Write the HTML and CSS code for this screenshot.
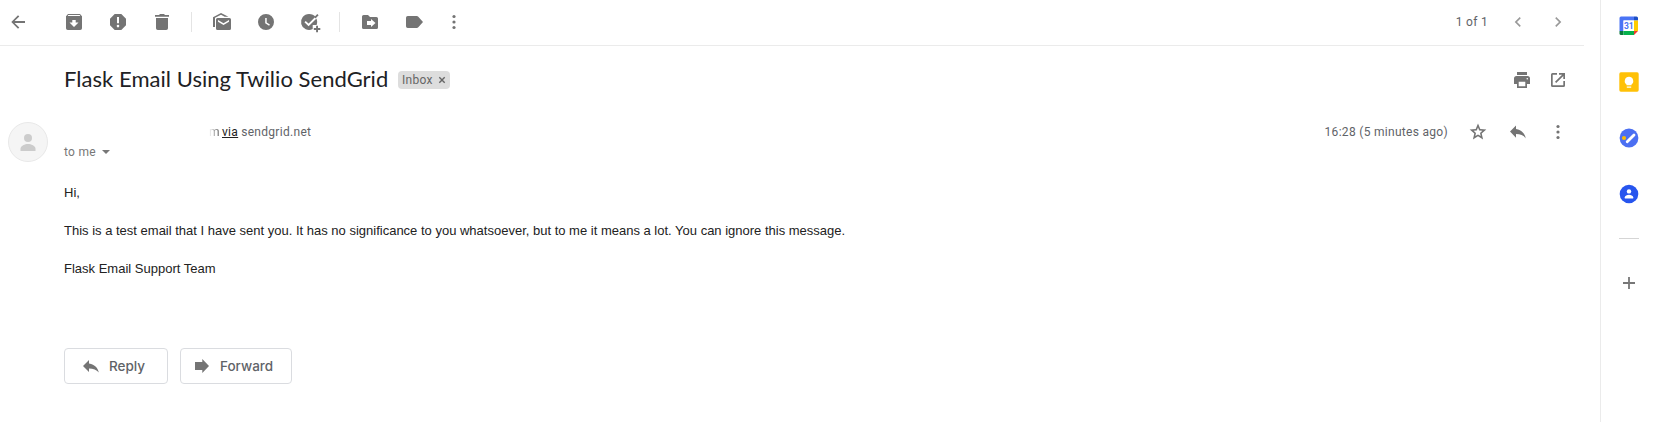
FILE: index.html
```html
<!DOCTYPE html>
<html lang="en">
<head>
<meta charset="utf-8">
<title>Flask Email Using Twilio SendGrid</title>
<link rel="stylesheet" href="styles.css">
</head>
<body>
<div class="app">
  <main class="mail">
    <header class="toolbar">
      <svg class="icon back" viewBox="0 0 20 20"><path d="M17 9.1H6.600l4.700-4.500L10 3.300 3.300 10l6.700 6.700 1.300-1.300-4.700-4.500H17z"/></svg>
      <svg class="icon" viewBox="0 0 20 20"><path fill-rule="evenodd" d="M4 2h12l2 2.300V16.200a1.800 1.800 0 0 1-1.800 1.800H3.800A1.800 1.800 0 0 1 2 16.200V4.300zM4.300 3L3.700 4h12.600l-.600-1zM8.300 8v2.500H5.500L10 15l4.500-4.500h-2.800V8z"/></svg>
      <svg class="icon" viewBox="0 0 20 20"><path fill-rule="evenodd" d="M6.700 2h6.600L18 6.700v6.600L13.300 18H6.700L2 13.300V6.700zM9 5v6.300h2V5zM10 12.800a1.300 1.300 0 1 0 0 2.600 1.300 1.300 0 0 0 0-2.600z"/></svg>
      <svg class="icon" viewBox="0 0 20 20"><path d="M3 3h4l1-1h4l1 1h4v1.800H3zM4 6h12v10.200a1.800 1.800 0 0 1-1.800 1.800H5.800A1.800 1.800 0 0 1 4 16.200z"/></svg>
      <span class="divider"></span>
      <svg class="icon" viewBox="0 0 20 20"><path d="M1 15V5.200L9 1l7.500 3.700h-3.800L9 2.800 3 5.700V15z"/><path fill-rule="evenodd" d="M5.500 6h12A1.500 1.500 0 0 1 19 7.500v9a1.500 1.500 0 0 1-1.500 1.500h-12A1.500 1.500 0 0 1 4 16.500v-9A1.500 1.500 0 0 1 5.500 6zM6 8v1.700l5.500 3.300L17 9.700V8l-5.500 3.300z"/></svg>
      <svg class="icon" viewBox="0 0 20 20"><path fill-rule="evenodd" d="M10 2a8 8 0 1 0 0 16 8 8 0 0 0 0-16zM9.200 6h1.500v4.500l3.200 2-.8 1.300-3.900-2.500z"/></svg>
      <svg class="icon wide" viewBox="0 0 20 20"><path d="M9 2a8 8 0 1 0 3.700 15.100V13h3.900A8 8 0 0 0 9 2z"/><path class="knock" d="M5.100 9.600L8.600 13l9-9"/><path d="M17.300 2l1.300 1.300-3.100 3.200-1.100-1.500z"/><path d="M16.100 13.800H18v2.300h2.300V18H18v2.300h-1.900V18h-2.300v-1.900h2.300z"/></svg>
      <span class="divider"></span>
      <svg class="icon" viewBox="0 0 20 20"><path fill-rule="evenodd" d="M3.600 3H8l2 2h6.400A1.600 1.600 0 0 1 18 6.600v8.800a1.600 1.600 0 0 1-1.600 1.600H3.600A1.600 1.600 0 0 1 2 15.400V4.600A1.600 1.600 0 0 1 3.600 3zM11 7v2H7v4h4v2l4.500-4z"/></svg>
      <svg class="icon" viewBox="0 0 20 20"><path d="M3.700 4h9.100c.6 0 1.100.3 1.500.7L19 10l-4.700 5.300c-.4.400-.9.700-1.500.7H3.700A1.700 1.700 0 0 1 2 14.300V5.700A1.700 1.700 0 0 1 3.700 4z"/></svg>
      <svg class="icon more" viewBox="0 0 20 20"><circle cx="10" cy="4.500" r="1.600"/><circle cx="10" cy="10" r="1.600"/><circle cx="10" cy="15.500" r="1.600"/></svg>
      <span class="count">1 of 1</span>
      <svg class="icon pale" viewBox="0 0 20 20"><path d="M12.800 6.200L9 10l3.800 3.800-1.100 1.200-5-5 5-5z"/></svg>
      <svg class="icon pale" viewBox="0 0 20 20"><path d="M7.200 6.200L11 10l-3.800 3.800L8.300 15l5-5-5-5z"/></svg>
    </header>

    <section class="subject">
      <h1>Flask Email Using Twilio SendGrid</h1>
      <span class="chip">Inbox<svg class="chip-x" viewBox="0 0 8 8"><path d="M1.300 1.300l5.400 5.400M6.700 1.300L1.300 6.700"/></svg></span>
      <div class="actions">
        <svg class="icon" viewBox="0 0 20 20"><path d="M5 2h10v3H5z"/><path fill-rule="evenodd" d="M4.500 6h11A2.500 2.500 0 0 1 18 8.500V14h-3v4H5v-4H2V8.500A2.500 2.500 0 0 1 4.500 6zM6.700 11.700v4.600h6.600v-4.600zM15.300 8a.8.8 0 1 0 0 1.600.8.8 0 0 0 0-1.600z"/></svg>
        <svg class="icon" viewBox="0 0 20 20"><path d="M9 3v1.700H4.700v10.600h10.600V11H17v4.500a1.500 1.500 0 0 1-1.500 1.500h-11A1.500 1.500 0 0 1 3 15.500v-11A1.500 1.500 0 0 1 4.500 3zM11 3h6v6h-1.700V5.900l-7.100 7.100L7 11.800l7.100-7.100H11z"/></svg>
      </div>
    </section>

    <section class="sender">
      <svg class="avatar" viewBox="0 0 40 40"><circle class="disc" cx="20" cy="20" r="19.500"/><circle class="figure" cx="20" cy="16" r="4"/><path class="figure" d="M12.500 29v-2.300c0-3 4.500-4.700 7.500-4.700s7.500 1.700 7.500 4.700V29z"/></svg>
      <div class="who">
        <div class="from"><span class="faded">m</span><a class="via">via</a><span>sendgrid.net</span></div>
        <div class="to">to me<span class="caret"></span></div>
      </div>
      <div class="meta">
        <span class="time">16:28 (5 minutes ago)</span>
        <svg class="icon" viewBox="0 0 20 20"><path fill-rule="evenodd" d="M10 1.500l2.300 5.500 6 .5-4.600 4 1.400 5.900-5.100-3.200-5.100 3.200 1.400-5.900-4.600-4 6-.5zM10 5.500L8.800 8.500l-3.200.3L8 11l-.7 3.100L10 12.500l2.700 1.600-.7-3.100 2.400-2.200-3.200-.3z"/></svg>
        <svg class="icon" viewBox="0 0 20 20"><path d="M8 7V3.500L2 9.600l6 6.100v-3.600c4.300 0 7.500 1.200 9.800 4.300C17 12 14 8 8 7z"/></svg>
        <svg class="icon" viewBox="0 0 20 20"><circle cx="10" cy="4.500" r="1.600"/><circle cx="10" cy="10" r="1.600"/><circle cx="10" cy="15.500" r="1.600"/></svg>
      </div>
    </section>

    <article class="body">
      <p>Hi,</p>
      <p>This is a test email that I have sent you. It has no significance to you whatsoever, but to me it means a lot. You can ignore this message.</p>
      <p>Flask Email Support Team</p>
    </article>

    <footer class="buttons">
      <button class="btn reply"><svg class="icon" viewBox="0 0 20 20"><path d="M8 7.400V4L2 10l6 6v-3.500c4.300 0 7.500 1.200 9.800 4.100C17 12.200 14 8.300 8 7.400z"/></svg><span>Reply</span></button>
      <button class="btn forward"><svg class="icon" viewBox="0 0 20 20"><path d="M3 6h7.300V3L17 10l-6.700 7v-3H3z"/></svg><span>Forward</span></button>
    </footer>
  </main>

  <aside class="side">
    <svg class="app-icon" viewBox="0 0 20 20"><path fill="#4a74f5" d="M2 .5h13v4H4.500V15H.5V2A1.500 1.500 0 0 1 2 .5z"/><path fill="#1d4fc4" d="M15 .5h2.500A1.500 1.500 0 0 1 19 2v2.500h-4z"/><path fill="#fc0" d="M15 4.500h4V15h-4z"/><path fill="#08793a" d="M.5 15h4v4H2a1.500 1.500 0 0 1-1.500-1.500z"/><path fill="#05b14c" d="M4.500 15H15v4H4.500z"/><path fill="#ee3a30" d="M15 15h4l-4 4z"/><path fill="#fff" d="M4.500 4.500H15V15H4.500z"/><text class="date" x="9.800" y="13" text-anchor="middle">31</text></svg>
    <svg class="app-icon" viewBox="0 0 20 20"><rect x=".3" y=".3" width="19.400" height="19.400" rx="1.600" fill="#ffc107"/><path fill="#fff" d="M10 4.800a4.200 4.200 0 0 0-2.500 7.600v.9h5v-.9A4.200 4.200 0 0 0 10 4.800zM7.800 14.400h4.400v1.300H7.800z"/></svg>
    <svg class="app-icon" viewBox="0 0 20 20"><circle cx="10" cy="10" r="9.400" fill="#4b6ff2"/><circle cx="5" cy="10" r="2.100" fill="#fbbc04"/><path class="stroke-white" d="M8.200 13.800l6.800-6.900"/></svg>
    <svg class="app-icon" viewBox="0 0 20 20"><circle cx="10" cy="10" r="9.300" fill="#2755ee"/><circle cx="10" cy="7.400" r="2.200" fill="#fff"/><path fill="#fff" d="M5.800 14.500v-1.200c0-1.600 2.400-2.500 4.200-2.500s4.200.9 4.200 2.500v1.200z"/></svg>
    <span class="rule"></span>
    <svg class="app-icon plus" viewBox="0 0 20 20"><path d="M9.100 4h1.800v5.100H16v1.800h-5.100V16H9.100v-5.100H4V9.100h5.100z"/></svg>
  </aside>
</div>
</body>
</html>
```
FILE: styles.css
```css
* { box-sizing: border-box; }
body { margin: 0; background: #fff; color: #222; font-family: Roboto, sans-serif; overflow: hidden; }
svg { display: block; flex: none; }
.app { display: flex; width: 1656px; height: 422px; }
.mail { width: 1600px; padding-right: 16px; }
.icon { width: 20px; height: 20px; fill: #747474; }
.pale { fill: #999; }

.toolbar { display: flex; align-items: center; height: 46px; padding: 0 16px 2px 8px; border-bottom: 1px solid #ebebeb; }
.toolbar .icon { margin-right: 24px; }
.toolbar .back { margin-right: 36px; }
.toolbar .wide { overflow: visible; }
.toolbar .more { margin-right: 0; margin-left: -4px; }
.toolbar .pale { margin-right: 20px; }
.toolbar .pale:last-child { margin-right: 0; }
.divider { width: 1px; height: 20px; margin: 0 20px 0 -5px; background: #e4e4e4; }
.knock { fill: none; stroke: #fff; stroke-width: 1.900; }
.count { margin-left: auto; margin-right: 20px; font-size: 12px; letter-spacing: .3px; color: #5f6368; }

.subject { display: flex; align-items: center; height: 68px; padding: 0 16px 0 64px; }
.subject h1 { width: 323px; margin: 0 11px 0 0; padding-bottom: 2px; font: 400 22px/28px Lato, sans-serif; letter-spacing: .04px; white-space: nowrap; color: #202124; }
.chip { display: flex; align-items: center; width: 52px; height: 18px; padding-left: 4px; border-radius: 4px; background: #ddd; color: #666; font-size: 12px; letter-spacing: .3px; }
.chip-x { width: 8px; height: 8px; margin-left: 5px; stroke: #666; stroke-width: 1.400; fill: none; }
.actions { display: flex; gap: 16px; margin-left: auto; }

.sender { display: flex; height: 56px; padding: 8px 16px 0 8px; font-size: 12px; letter-spacing: .3px; color: #5f6368; }
.avatar { width: 40px; height: 40px; margin-right: 16px; }
.disc { fill: #f5f5f5; stroke: #e8e8e8; }
.figure { fill: #ccc; }
.who { line-height: 20px; }
.from { display: flex; gap: 3px; padding-left: 145px; }
.faded { width: 10px; color: transparent; background: linear-gradient(90deg, #fff, #555); background-clip: text; -webkit-background-clip: text; }
.via { color: #222; text-decoration: underline; }
.to { display: flex; align-items: center; color: #777; }
.caret { margin-left: 6px; border: 4px solid transparent; border-top-color: #777; border-bottom: 0; }
.meta { display: flex; align-items: center; gap: 20px; height: 20px; margin-left: auto; }

.body { padding: 13px 0 0 64px; font: 13px/19px "Liberation Sans", Arial, sans-serif; }
.body p { margin: 0 0 19px; }

.buttons { display: flex; gap: 12px; padding: 51px 0 0 64px; }
.btn { display: flex; align-items: center; height: 36px; border: 1px solid #dadce0; border-radius: 4px; background: #fff; padding: 0 0 1px; color: #5f6368; font: 500 13.500px/20px Inter, sans-serif; }
.reply { width: 104px; padding-left: 16px; gap: 8px; }
.forward { width: 112px; padding-left: 11px; gap: 8px; }

.side { display: flex; flex-direction: column; align-items: center; width: 56px; padding-top: 16px; border-left: 1px solid #ebebeb; }
.app-icon { width: 20px; height: 20px; margin-bottom: 36px; }
.date { font: 700 8.500px Roboto, sans-serif; fill: #4a74f5; }
.stroke-white { stroke: #fff; stroke-width: 2.800; stroke-linecap: round; fill: none; }
.rule { width: 20px; height: 1px; margin: -2px 0 34px; background: #d5d5d5; }
.plus { fill: #777; }
```
